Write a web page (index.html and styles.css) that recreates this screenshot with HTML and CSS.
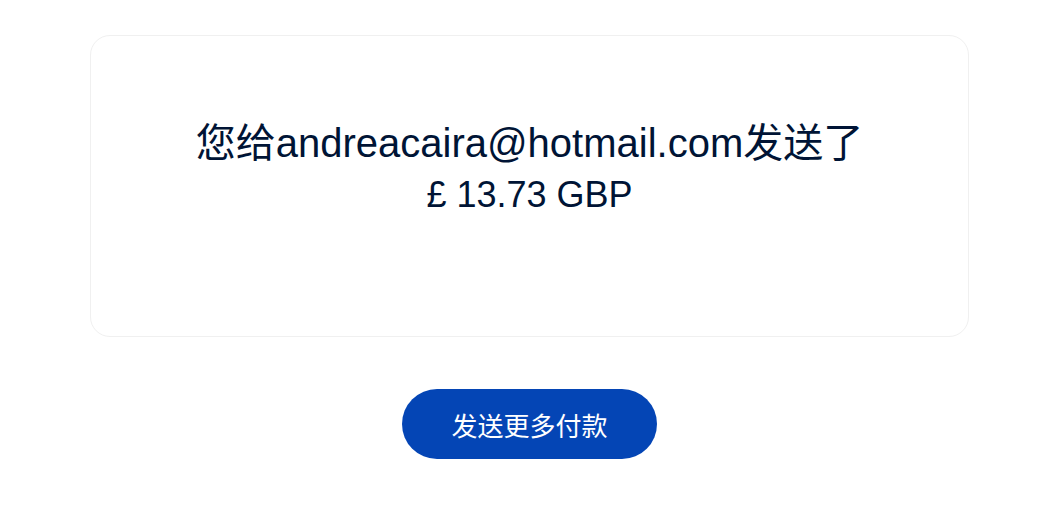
FILE: index.html
```html
<!DOCTYPE html>
<html lang="zh-CN">
<head>
    <meta charset="UTF-8">
    <meta name="viewport" content="width=device-width, initial-scale=1.0">
    <title>付款已发送</title>
    <link rel="stylesheet" href="styles.css">
</head>
<body>
    <div class="page">
        <div class="card">
            <p class="message">
                <span class="recipient">您给andreacaira@hotmail.com发送了</span>
                <span class="amount">£ 13.73 GBP</span>
            </p>
        </div>
        <div class="actions">
            <button class="send-more">发送更多付款</button>
        </div>
    </div>
</body>
</html>
```

FILE: styles.css
```css
body {
    margin: 0;
    background-color: #fff;
    font-family: "Liberation Sans", Arial, "Noto Sans CJK SC", sans-serif;
    color: #001435;
}

.page {
    padding: 35px 84px 0 90px;
}

.card {
    border: 1px solid #f0f0f0;
    border-radius: 20px;
    padding: 80px 20px 117px;
    text-align: center;
}

.message {
    margin: 0;
}

.message span {
    display: block;
}

.recipient {
    font-size: 40px;
    line-height: 55px;
}

.amount {
    font-size: 36px;
    line-height: 48px;
}

.actions {
    display: flex;
    justify-content: center;
    margin-top: 52px;
}

.send-more {
    width: 255px;
    height: 70px;
    border: none;
    border-radius: 35px;
    background-color: #0445b5;
    color: #fff;
    font-family: "Liberation Sans", Arial, "Noto Sans CJK SC", sans-serif;
    font-size: 26px;
    cursor: pointer;
}
```
